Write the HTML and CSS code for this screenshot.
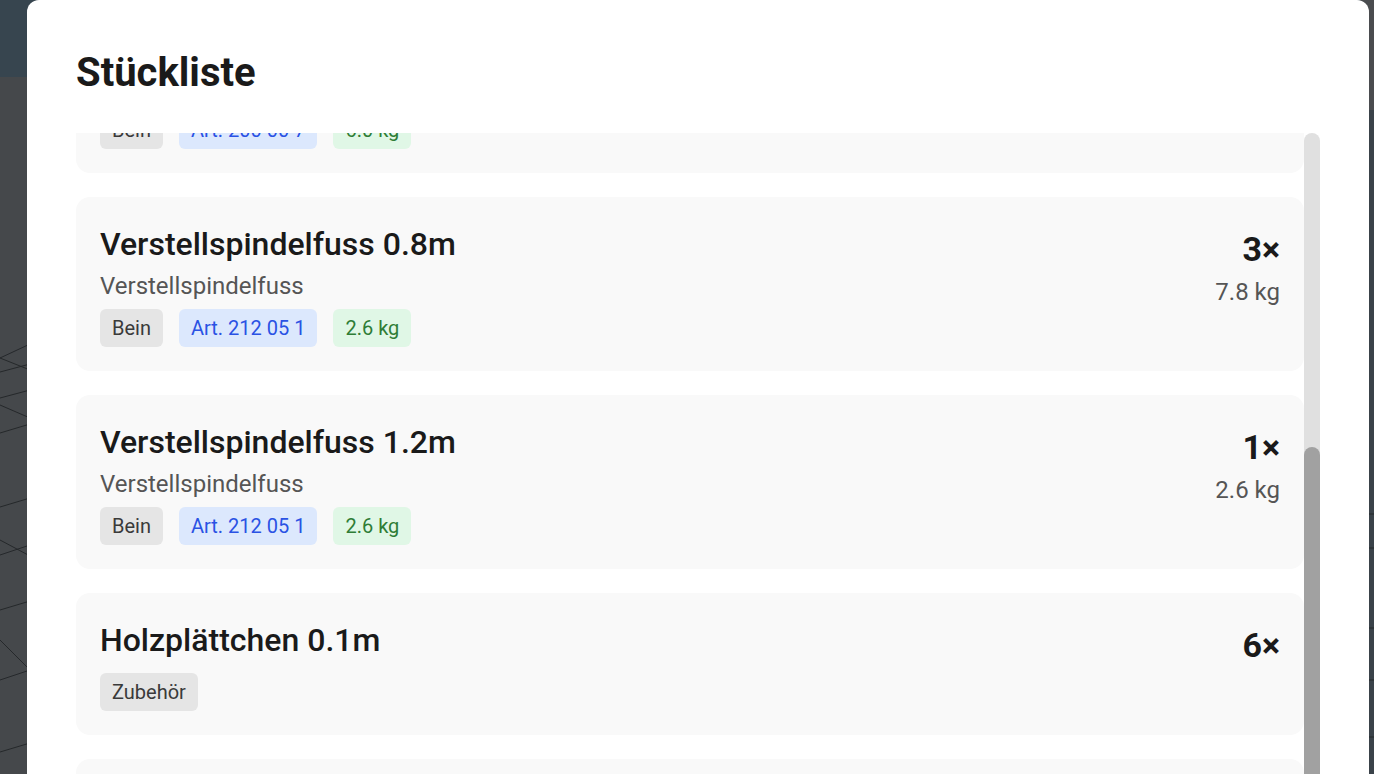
FILE: index.html
```html
<!DOCTYPE html>
<html lang="de">
<head>
<meta charset="utf-8">
<title>Stückliste</title>
<link rel="stylesheet" href="styles.css">
</head>
<body>
<svg class="scene" width="1374" height="774" viewBox="0 0 1374 774" aria-hidden="true">
  <rect x="0" y="0" width="1374" height="77" fill="#37454f"/>
  <rect x="0" y="77" width="1374" height="697" fill="#45484b"/>
  <rect x="1360" y="0" width="14" height="110" fill="#4a4c4f"/>
  <rect x="1360" y="110" width="14" height="664" fill="#3a4249"/>
  <g stroke="#25282b" stroke-width="1" fill="none">
    <line x1="0" y1="358" x2="30" y2="344"/>
    <line x1="0" y1="372" x2="30" y2="364"/>
    <line x1="0" y1="398" x2="30" y2="390"/>
    <line x1="0" y1="433" x2="30" y2="424"/>
    <line x1="0" y1="507" x2="30" y2="498"/>
    <line x1="0" y1="555" x2="30" y2="545"/>
    <line x1="0" y1="610" x2="30" y2="601"/>
    <line x1="0" y1="680" x2="30" y2="670"/>
    <line x1="0" y1="752" x2="30" y2="743"/>
    <line x1="0" y1="358" x2="30" y2="370"/>
    <line x1="0" y1="405" x2="30" y2="418"/>
    <line x1="0" y1="540" x2="30" y2="556"/>
    <line x1="0" y1="640" x2="30" y2="670"/>
    <line x1="1368" y1="514" x2="1374" y2="514"/>
    <line x1="1368" y1="548" x2="1374" y2="548"/>
    <line x1="1368" y1="628" x2="1374" y2="628"/>
    <line x1="1368" y1="680" x2="1374" y2="680"/>
    <line x1="1368" y1="737" x2="1374" y2="737"/>
  </g>
</svg>

<div class="modal">
  <h1 class="modal-title">Stückliste</h1>
  <div class="list-wrap">
    <div class="list">
      <div class="item item-clipped">
        <div class="item-main">
          <div class="tags">
            <span class="tag tag-cat">Bein</span>
            <span class="tag tag-art">Art. 200 00 7</span>
            <span class="tag tag-kg">6.0 kg</span>
          </div>
        </div>
      </div>
      <div class="item">
        <div class="item-main">
          <div class="item-name">Verstellspindelfuss 0.8m</div>
          <div class="item-type">Verstellspindelfuss</div>
          <div class="tags">
            <span class="tag tag-cat">Bein</span>
            <span class="tag tag-art">Art. 212 05 1</span>
            <span class="tag tag-kg">2.6 kg</span>
          </div>
        </div>
        <div class="item-qty">
          <div class="qty">3×</div>
          <div class="qty-kg">7.8 kg</div>
        </div>
      </div>
      <div class="item">
        <div class="item-main">
          <div class="item-name">Verstellspindelfuss 1.2m</div>
          <div class="item-type">Verstellspindelfuss</div>
          <div class="tags">
            <span class="tag tag-cat">Bein</span>
            <span class="tag tag-art">Art. 212 05 1</span>
            <span class="tag tag-kg">2.6 kg</span>
          </div>
        </div>
        <div class="item-qty">
          <div class="qty">1×</div>
          <div class="qty-kg">2.6 kg</div>
        </div>
      </div>
      <div class="item">
        <div class="item-main">
          <div class="item-name">Holzplättchen 0.1m</div>
          <div class="tags">
            <span class="tag tag-cat">Zubehör</span>
          </div>
        </div>
        <div class="item-qty">
          <div class="qty">6×</div>
        </div>
      </div>
      <div class="item item-tail"></div>
    </div>
    <div class="scrollbar">
      <div class="thumb"></div>
    </div>
  </div>
</div>
</body>
</html>
```

FILE: styles.css
```css
html, body {
  margin: 0;
  padding: 0;
  height: 100%;
  overflow: hidden;
}

body {
  position: relative;
  background: #45484b;
  font-family: Roboto, "Noto Sans", "Liberation Sans", sans-serif;
  color: #1a1a1a;
}

.scene {
  position: absolute;
  left: 0;
  top: 0;
}

.modal {
  position: relative;
  margin-left: 27px;
  width: 1342px;
  height: 774px;
  box-sizing: border-box;
  padding: 49px 49px 0 49px;
  background: #ffffff;
  border-radius: 12px 12px 0 0;
  display: flex;
  flex-direction: column;
}

.modal-title {
  margin: 0;
  font-size: 40px;
  line-height: 48px;
  font-weight: 700;
  color: #1a1a1a;
}

.list-wrap {
  margin-top: 36px;
  flex: 1;
  min-height: 0;
  display: flex;
}

.list {
  flex: 1;
  min-width: 0;
  overflow: hidden;
  display: flex;
  flex-direction: column;
  gap: 24px;
}

.scrollbar {
  position: relative;
  flex: none;
  width: 16px;
  background: #e0e0e0;
  border-radius: 8px 8px 0 0;
}

.thumb {
  position: absolute;
  left: 0;
  right: 0;
  top: 314px;
  height: 400px;
  background: #a1a1a1;
  border-radius: 8px;
}

.item {
  flex: none;
  display: flex;
  justify-content: space-between;
  align-items: flex-start;
  padding: 24px;
  background: #f9f9f9;
  border-radius: 14px;
}

.item-clipped {
  margin-top: -46px;
}

.item-tail {
  height: 60px;
}

.item-main {
  display: flex;
  flex-direction: column;
  align-items: flex-start;
}

.item-name {
  font-size: 32px;
  line-height: 46px;
  font-weight: 500;
  color: #1a1a1a;
}

.item-type {
  margin-top: 6px;
  font-size: 24px;
  line-height: 26px;
  color: #555555;
}

.tags {
  margin-top: 10px;
  display: flex;
  gap: 16px;
}

.item-clipped .tags {
  margin-top: 0;
}

.tag {
  font-size: 20px;
  line-height: 24px;
  padding: 7px 12px;
  border-radius: 6px;
}

.tag-cat {
  background: #e5e5e5;
  color: #3a3a3a;
}

.tag-art {
  background: #dce8fd;
  color: #2a52e4;
}

.tag-kg {
  background: #e0f7e6;
  color: #2f7d36;
}

.item-qty {
  display: flex;
  flex-direction: column;
  align-items: flex-end;
}

.qty {
  margin-top: 7px;
  font-size: 34px;
  line-height: 42px;
  font-weight: 700;
  color: #1a1a1a;
}

.qty-kg {
  margin-top: 8px;
  font-size: 24px;
  line-height: 28px;
  color: #555555;
}
```
